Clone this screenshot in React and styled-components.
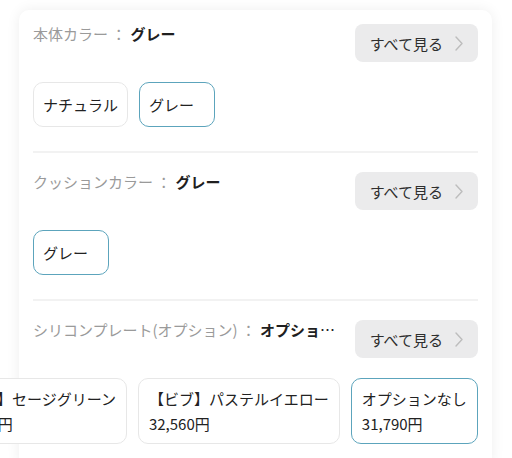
import React, { useLayoutEffect, useRef } from "react";
import styled, { createGlobalStyle } from "styled-components";

const GlobalStyle = createGlobalStyle`
  * {
    box-sizing: border-box;
  }

  body {
    margin: 0;
    background-color: #ffffff;
    font-family: "Noto Sans CJK JP", "Noto Sans", sans-serif;
    color: #222222;
    overflow: hidden;
  }
`;

// Outer page area around the card
const Page = styled.div`
  padding: 10px 20px 0 19px;
`;

// White card with a soft shadow
const Card = styled.div`
  background-color: #ffffff;
  border-radius: 10px;
  box-shadow: 0 0 14px rgba(0, 0, 0, 0.07);
  padding: 0 14px;
`;

// One option group (body colour, cushion colour ...)
const Section = styled.section`
  padding: ${(props) => (props.$first ? "14px" : "19px")} 0 24px;
  border-top: ${(props) => (props.$first ? "none" : "2px solid #f2f2f2")};
`;

// Title on the left, "see all" button on the right
const HeaderRow = styled.div`
  display: flex;
  align-items: flex-start;
  gap: 10px;
`;

const Title = styled.div`
  flex: 1;
  min-width: 0;
  margin-top: -1px;
  font-size: 15px;
  line-height: 22px;
  white-space: nowrap;
  overflow: hidden;
  text-overflow: ellipsis;
`;

const Label = styled.span`
  color: #9a9a9a;
`;

const Value = styled.span`
  margin-left: 4px;
  color: #1f1f1f;
  font-weight: 700;
`;

const SeeAllButton = styled.button`
  flex-shrink: 0;
  display: flex;
  align-items: center;
  gap: 12px;
  height: 38px;
  padding: 0 15px;
  border: none;
  border-radius: 8px;
  background-color: #ebebec;
  font-family: inherit;
  font-size: 15px;
  color: #2e2e2e;
  cursor: pointer;
`;

// Row of selectable chips, scrolls sideways when it overflows
const ChipRow = styled.div`
  display: flex;
  gap: 11px;
  margin-top: 20px;
  margin-left: ${(props) => (props.$bleed ? "-33px" : "0")};
  overflow-x: auto;
  scrollbar-width: none;

  &::-webkit-scrollbar {
    display: none;
  }
`;

const Chip = styled.button`
  flex-shrink: 0;
  min-width: 76px;
  padding: ${(props) => (props.$twoLine ? "7px 10px" : "10px 9px")};
  border: 1.5px solid ${(props) => (props.$selected ? "#5ca4bc" : "#e7e7e7")};
  border-radius: 10px;
  background-color: #ffffff;
  font-family: inherit;
  font-size: 15px;
  line-height: ${(props) => (props.$twoLine ? "25px" : "23px")};
  color: #222222;
  text-align: left;
  white-space: nowrap;
`;

const ChipLine = styled.div``;

const Chevron = () => (
  <svg width="8" height="15" viewBox="0 0 8 15" fill="none">
    <polyline
      points="1,1 7,7.5 1,14"
      stroke="#bdbdbd"
      strokeWidth="1.4"
      strokeLinecap="round"
      strokeLinejoin="round"
    />
  </svg>
);

const sections = [
  {
    label: "本体カラー ：",
    value: "グレー",
    chips: [
      { name: "ナチュラル" },
      { name: "グレー", selected: true },
    ],
  },
  {
    label: "クッションカラー ：",
    value: "グレー",
    chips: [{ name: "グレー", selected: true }],
  },
  {
    label: "シリコンプレート(オプション) ：",
    value: "オプションなし",
    scroll: true,
    chips: [
      { name: "【ビブ】セージグリーン", price: "32,560円" },
      { name: "【ビブ】パステルイエロー", price: "32,560円" },
      { name: "オプションなし", price: "31,790円", selected: true },
    ],
  },
];

// Chip list that starts scrolled to its last (selected) chip
const OptionChips = ({ chips, scroll }) => {
  const rowRef = useRef(null);

  useLayoutEffect(() => {
    if (scroll && rowRef.current) {
      rowRef.current.scrollLeft = rowRef.current.scrollWidth;
    }
  }, [scroll]);

  return (
    <ChipRow ref={rowRef} $bleed={scroll}>
      {chips.map((chip) => (
        <Chip key={chip.name} $selected={chip.selected} $twoLine={!!chip.price}>
          <ChipLine>{chip.name}</ChipLine>
          {chip.price && <ChipLine>{chip.price}</ChipLine>}
        </Chip>
      ))}
    </ChipRow>
  );
};

const App = () => {
  return (
    <>
      <GlobalStyle />
      <Page>
        <Card>
          {sections.map((section, i) => (
            <Section key={section.label} $first={i === 0}>
              <HeaderRow>
                <Title>
                  <Label>{section.label}</Label>
                  <Value>{section.value}</Value>
                </Title>
                <SeeAllButton>
                  すべて見る
                  <Chevron />
                </SeeAllButton>
              </HeaderRow>
              <OptionChips chips={section.chips} scroll={section.scroll} />
            </Section>
          ))}
        </Card>
      </Page>
    </>
  );
};

export default App;
